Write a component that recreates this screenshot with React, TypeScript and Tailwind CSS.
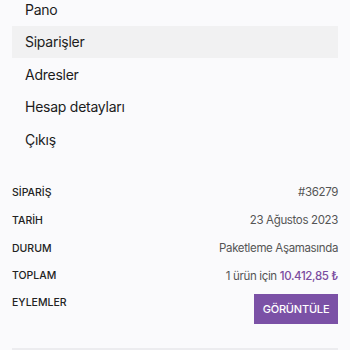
const menu = ["Pano", "Siparişler", "Adresler", "Hesap detayları", "Çıkış"];

const rows = [
  { label: "SİPARİŞ", value: "#36279" },
  { label: "TARİH", value: "23 Ağustos 2023" },
  { label: "DURUM", value: "Paketleme Aşamasında" },
];

export default function App() {
  return (
    <div
      className="h-[350px] w-[350px] overflow-hidden bg-[#fafafc] text-[#222]"
      style={{ fontFamily: "Inter, 'Noto Sans', sans-serif" }}
    >
      <nav className="mx-3 -mt-[7px] flex flex-col">
        {menu.map((item) => (
          <div
            key={item}
            className={
              "flex h-[32.5px] items-center px-[13px] text-[14px] tracking-[-0.25px] text-[#1c1c1c] " +
              (item === "Siparişler" ? "bg-[#f1f1f2]" : "")
            }
          >
            {item}
          </div>
        ))}
      </nav>

      <div className="mx-3 mt-[23px] border-b-2 border-[#ececef] pb-[24px]">
        {rows.map((r) => (
          <div key={r.label} className="flex h-[28px] items-center justify-between">
            <span className="text-[10.5px] font-medium text-[#222]">{r.label}</span>
            <span className="text-[11.5px] tracking-[-0.35px] text-[#555]">{r.value}</span>
          </div>
        ))}
        <div className="flex h-[27.5px] items-center justify-between">
          <span className="text-[10.5px] font-medium text-[#222]">TOPLAM</span>
          <span className="text-[11.5px] tracking-[-0.35px] text-[#555]">
            1 ürün için{" "}
            <span className="font-medium text-[#7a4ca0]">10.412,85 ₺</span>
          </span>
        </div>
        <div className="mt-[4px] flex items-start justify-between">
          <span className="pt-[1px] text-[10.5px] font-medium text-[#222]">EYLEMLER</span>
          <button className="h-[30px] w-[84px] bg-[#7b51a6] text-[11px] font-medium tracking-[-0.2px] text-white">
            GÖRÜNTÜLE
          </button>
        </div>
      </div>
    </div>
  );
}
